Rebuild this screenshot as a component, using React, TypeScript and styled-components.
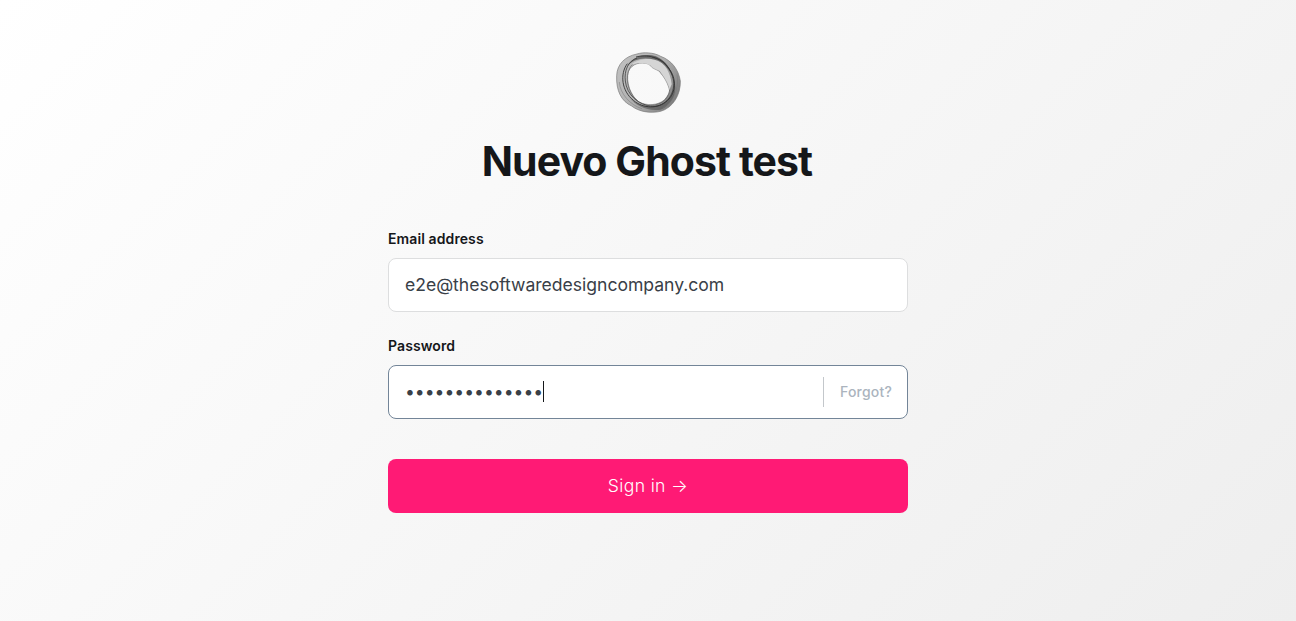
import React from 'react';
import styled, { createGlobalStyle } from 'styled-components';

const GlobalStyle = createGlobalStyle`
  *, *::before, *::after { box-sizing: border-box; }
  body {
    margin: 0;
    font-family: Inter, "Liberation Sans", sans-serif;
    color: #15171a;
  }
`;

const Page = styled.main`
  display: flex;
  flex-direction: column;
  align-items: center;
  height: 621px;
  padding-top: 42px;
  background: linear-gradient(135deg, #fff 0%, #eee 100%);
  overflow: hidden;
`;

const Logo = styled.svg`
  display: block;
  width: 80px;
  height: 80px;
`;

const Title = styled.h1`
  margin: 15px 2px 0 0;
  font-size: 41px;
  line-height: 48px;
  font-weight: 700;
  letter-spacing: -0.93px;
  white-space: nowrap;
`;

const Form = styled.form`
  display: flex;
  flex-direction: column;
  width: 520px;
  margin-top: 45px;
`;

const Field = styled.div`
  display: flex;
  flex-direction: column;
  margin-bottom: 25px;
`;

const Label = styled.label`
  margin-bottom: 10px;
  font-size: 14px;
  line-height: 18px;
  font-weight: 600;
  letter-spacing: 0.1px;
`;

const Control = styled.div<{ $focused?: boolean }>`
  display: flex;
  align-items: center;
  height: 54px;
  padding: 0 15px 0 16px;
  border: 1px solid ${(p) => (p.$focused ? '#738598' : '#dddedf')};
  border-radius: 8px;
  background: #fff;
  color: #394047;
  font-size: 17.6px;
`;

const Value = styled.span`
  line-height: 24px;
  letter-spacing: -0.03px;
`;

const Caret = styled.span`
  width: 1px;
  height: 21px;
  margin-bottom: 2px;
  background: #15171a;
`;

const Forgot = styled.button`
  height: 30px;
  margin-left: auto;
  padding: 0 0 2px 16px;
  border: 0;
  border-left: 1px solid #c3c7cb;
  background: none;
  color: #abb4be;
  font: 500 14px Inter, sans-serif;
  letter-spacing: 0.2px;
`;

const SignIn = styled.button`
  height: 54px;
  margin-top: 15px;
  padding: 0 0 2px;
  border: 0;
  border-radius: 8px;
  background: #ff1a75;
  color: #fff;
  font: 300 17.6px Inter, sans-serif;
  letter-spacing: 0.35px;
`;

function RingLogo() {
  return (
    <Logo viewBox="0 0 240 240" fill="none">
      <defs>
        <linearGradient id="band" x1="30" y1="60" x2="215" y2="180" gradientUnits="userSpaceOnUse">
          <stop offset="0" stopColor="#c0c0c0" />
          <stop offset="0.5" stopColor="#b0b0b0" />
          <stop offset="1" stopColor="#777" />
        </linearGradient>
      </defs>
      <g transform="translate(1 1)">
        <path
          fill="url(#band)"
          fillRule="evenodd"
          stroke="#777"
          strokeWidth="2"
          d="M25 100C26 66 50 42 86 35C104 29 137 30 157 42C190 54 211 82 216 116C217 158 194 196 157 207C126 214 91 208 70 191C39 177 23 145 25 100ZM60 88C52 118 66 160 92 179C115 191 149 190 169 172C182 156 188 146 181 132C174 110 162 98 150 84C137 78 131 70 120 65C98 58 71 62 60 88Z"
        />
        <path fill="#d5d5d5" d="M66 70C86 50 121 47 148 53C169 63 187 91 190 126L183 143C180 124 166 104 154 87C140 80 132 80 124 68C105 60 80 60 66 70Z" />
        <path fill="#444" fillOpacity=".65" d="M54 73C74 42 111 31 143 42C174 55 195 88 198 126C194 91 169 60 139 52C104 43 75 51 54 73Z" />
        <path fill="#444" fillOpacity=".5" d="M62 165C80 186 115 199 151 190C179 184 201 153 198 118C209 153 188 190 156 202C121 208 83 192 62 165Z" />
        <path stroke="#2b2b2b" strokeWidth="3" strokeOpacity=".85" d="M57 64C34 95 40 146 75 174C104 199 150 201 177 175C203 152 206 108 181 78C158 42 114 36 83 44" />
        <path stroke="#333" strokeWidth="3" strokeOpacity=".75" d="M86 47C59 56 47 86 51 116C55 157 91 189 132 192C171 193 200 157 196 116C190 78 165 50 132 45" />
        <path stroke="#555" strokeWidth="1.5" d="M72 66C45 97 57 151 88 176M93 42C125 34 156 47 174 65M184 142C180 173 156 188 129 189" />
        <path stroke="#888" strokeWidth="1.5" d="M124 68C133 80 140 80 154 87C166 104 180 124 183 143" />
        <path stroke="#777" strokeWidth="1.5" d="M206 96C213 139 196 179 163 197M33 119C35 155 67 189 101 199" />
      </g>
    </Logo>
  );
}

export default function App() {
  return (
    <>
      <GlobalStyle />
      <Page>
        <RingLogo />
        <Title>Nuevo Ghost test</Title>
        <Form onSubmit={(e) => e.preventDefault()}>
          <Field>
            <Label>Email address</Label>
            <Control><Value>e2e@thesoftwaredesigncompany.com</Value></Control>
          </Field>
          <Field>
            <Label>Password</Label>
            <Control $focused>
              <Value>{'•'.repeat(14)}</Value>
              <Caret />
              <Forgot type="button">Forgot?</Forgot>
            </Control>
          </Field>
          <SignIn type="submit">Sign in →</SignIn>
        </Form>
      </Page>
    </>
  );
}
